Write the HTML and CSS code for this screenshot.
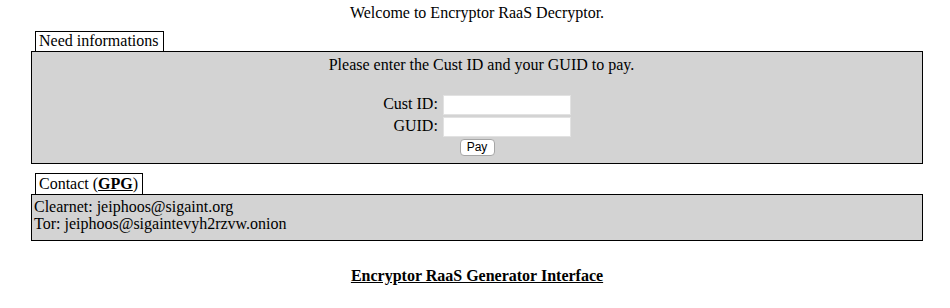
FILE: index.html
```html
<!DOCTYPE html>
<html>
<head>
<meta charset="utf-8">
<title>Encryptor RaaS Decryptor</title>
<link rel="stylesheet" href="styles.css">
</head>
<body>
<div class="page">
  <div class="welcome">Welcome to Encryptor RaaS Decryptor.</div>

  <section class="section">
    <div class="tab">Need informations</div>
    <div class="panel panel-form">
      <div class="intro">Please enter the Cust ID and your GUID to pay.</div>
      <form class="pay-form">
        <div class="fields">
          <label class="field-label" for="cust">Cust ID:</label>
          <input class="field-input" id="cust" type="text">
          <label class="field-label" for="guid">GUID:</label>
          <input class="field-input" id="guid" type="text">
        </div>
        <button class="pay-btn" type="button">Pay</button>
      </form>
    </div>
  </section>

  <section class="section">
    <div class="tab tab-contact">Contact (<a class="gpg" href="#">GPG</a>)</div>
    <div class="panel panel-contact">
      <div>Clearnet: jeiphoos@sigaint.org</div>
      <div>Tor: jeiphoos@sigaintevyh2rzvw.onion</div>
    </div>
  </section>

  <div class="footer-link"><a href="#">Encryptor RaaS Generator Interface</a></div>
</div>
</body>
</html>
```

FILE: styles.css
```css
html, body {
  margin: 0;
  padding: 0;
  background: #ffffff;
}

body {
  font-family: "Liberation Serif", "Times New Roman", serif;
  font-size: 16px;
  color: #000;
}

.page {
  padding: 4px 27px 0 31px;
}

.welcome {
  text-align: center;
  line-height: 18px;
}

.section {
  margin-top: 9px;
}

.tab {
  display: inline-block;
  margin-left: 4px;
  padding: 0 4px 2px 3px;
  line-height: 17px;
  background: #fff;
  border: 1px solid #000;
  border-bottom: none;
  vertical-align: top;
}

.tab-contact {
  padding-top: 1px;
}

.gpg {
  color: #000;
  font-weight: bold;
  text-decoration: underline;
}

.panel {
  background: #d3d3d3;
  border: 1px solid #000;
}

.panel-form {
  padding: 4px 0 7px;
}

.intro {
  text-align: center;
  padding-left: 9px;
  line-height: 18px;
}

.pay-form {
  display: flex;
  flex-direction: column;
  align-items: center;
  margin-top: 21px;
}

.fields {
  display: grid;
  grid-template-columns: auto 128px;
  column-gap: 5px;
  row-gap: 2px;
  align-items: center;
}

.field-label {
  text-align: right;
  line-height: 18px;
  margin-top: -3px;
}

.field-input {
  box-sizing: border-box;
  width: 128px;
  height: 20px;
  margin: 0;
  padding: 0 2px;
  background: #fff;
  border: 1px solid #e2e2e2;
  font-family: "Liberation Sans", Arial, sans-serif;
  font-size: 13px;
}

.pay-btn {
  box-sizing: border-box;
  margin-top: 2px;
  width: 35px;
  height: 17px;
  padding: 0;
  background: #fff;
  border: 1px solid #a6a6a6;
  border-radius: 4px;
  font-family: "Liberation Sans", Arial, sans-serif;
  font-size: 12px;
  line-height: 15px;
  color: #000;
}

.panel-contact {
  padding: 3px 2px 8px;
  line-height: 17px;
}

.footer-link {
  margin-top: 26px;
  text-align: center;
  font-weight: bold;
  line-height: 18px;
}

.footer-link a {
  color: #000;
  text-decoration: underline;
}
```
